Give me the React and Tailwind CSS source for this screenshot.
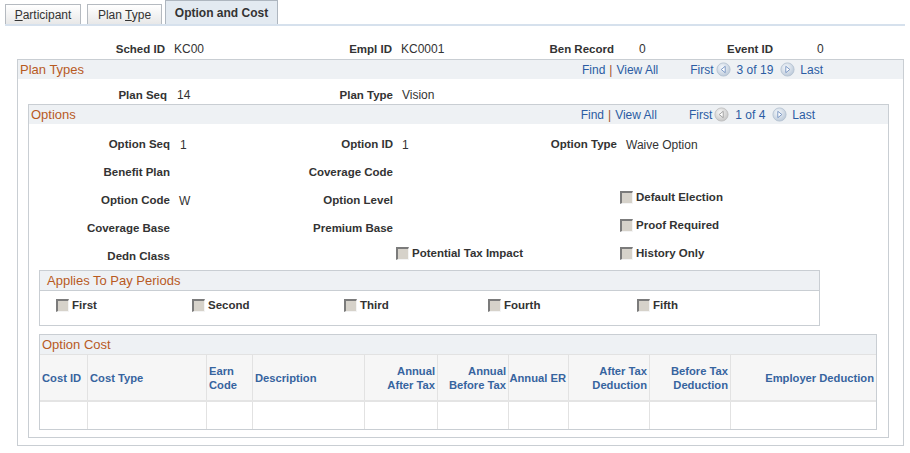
import React from "react";

const LBL = "font-bold text-[11.5px] text-[#333333] text-right whitespace-nowrap";
const VAL = "text-[12px] text-[#333333] whitespace-nowrap";
const LINK = "text-[#2b5ca3]";
const TITLE = "text-[13px] text-[#b85a1f]";

function Cb() {
  return (
    <span className="inline-block w-[13px] h-[13px] shrink-0 bg-[#d6d2ca] border-t-2 border-l-2 border-t-[#7b7b7b] border-l-[#7b7b7b] border-b border-r border-b-[#f4f4f4] border-r-[#f4f4f4]" />
  );
}

function CbLabel({ children }) {
  return (
    <div className="flex items-center gap-[3px] h-[12px] whitespace-nowrap">
      <Cb />
      <span className="font-bold text-[11.5px] text-[#333333] leading-[12px] whitespace-nowrap">{children}</span>
    </div>
  );
}

function Arrow({ dir, disabled }) {
  const id = `g-${dir}-${disabled ? "d" : "e"}`;
  return (
    <svg width="15" height="15" viewBox="0 0 15 15" className="shrink-0">
      <defs>
        <radialGradient id={id} cx="40%" cy="35%" r="70%">
          <stop offset="0%" stopColor={disabled ? "#f6f6f6" : "#f5f8fb"} />
          <stop offset="100%" stopColor={disabled ? "#c4c4c4" : "#b9c7d8"} />
        </radialGradient>
      </defs>
      <circle cx="7.5" cy="7.5" r="6.6" fill={`url(#${id})`} stroke={disabled ? "#bdbdbd" : "#b3c0cf"} strokeWidth="0.8" />
      <path
        d={dir === "l" ? "M9.2 4.3 L5.2 7.5 L9.2 10.7 Z" : "M5.8 4.3 L9.8 7.5 L5.8 10.7 Z"}
        fill="#ffffff"
        stroke={disabled ? "#9a9a9a" : "#6f8fbf"}
        strokeWidth="0.9"
        strokeLinejoin="round"
      />
    </svg>
  );
}

function Nav({ count, prevDisabled, pr }) {
  return (
    <div className={`ml-auto flex items-center text-[12px] whitespace-nowrap ${pr}`}>
      <span className={LINK}>Find</span>
      <span className="mx-[4px] text-[#a0522d]">|</span>
      <span className={LINK}>View All</span>
      <span className={`ml-[32px] ${LINK}`}>First</span>
      <span className="ml-[2px] flex"><Arrow dir="l" disabled={prevDisabled} /></span>
      <span className={`ml-[6px] ${LINK}`}>{count}</span>
      <span className="ml-[7px] flex"><Arrow dir="r" /></span>
      <span className={`ml-[5px] ${LINK}`}>Last</span>
    </div>
  );
}

function Tab({ children, active, w, cls = "" }) {
  return (
    <div
      className={`${w} ${cls} flex items-center justify-center border border-b-0 whitespace-nowrap ${
        active
          ? "h-[24px] bg-[#e3eaf1] border-[#aeb6bf] font-bold"
          : "h-[20px] bg-gradient-to-b from-[#ffffff] to-[#e8e8e8] border-[#b5bac0]"
      } text-[12px] text-[#333333]`}
    >
      {children}
    </div>
  );
}

const costCols = "grid-cols-[47px_119px_46px_112px_73px_71px_60px_81px_81px_1fr]";

function HCell({ children, right, first }) {
  return (
    <div
      className={`flex items-center px-[2px] whitespace-nowrap ${right ? "justify-end text-right" : ""} ${
        first ? "" : "border-l border-[#e2e2e2]"
      } font-bold text-[11.2px] leading-[14px] text-[#36649f]`}
    >
      <span>{children}</span>
    </div>
  );
}

export default function App() {
  return (
    <div className="w-[910px] h-[453px] overflow-hidden bg-white font-['Liberation_Sans',Arial,sans-serif] text-[#333333]">
      {/* Tabs */}
      <div className="ml-[5px] w-[900px] h-[26px] flex items-end border-b-2 border-[#d6e1ed]">
        <Tab w="w-[76px]">
          <span><span className="underline">P</span>articipant</span>
        </Tab>
        <Tab w="w-[75px]" cls="ml-[6px]">
          <span>Plan <span className="underline">T</span>ype</span>
        </Tab>
        <Tab w="w-[113px]" cls="ml-[3px]" active>
          Option and Cost
        </Tab>
      </div>

      {/* Header row */}
      <div className="mt-[15px] h-[16px] leading-[16px] grid grid-cols-[165px_135px_92px_128px_94px_86px_73px_1fr]">
        <div className={LBL}>Sched ID</div>
        <div className={`${VAL} pl-[9px]`}>KC00</div>
        <div className={LBL}>Empl ID</div>
        <div className={`${VAL} pl-[9px]`}>KC0001</div>
        <div className={LBL}>Ben Record</div>
        <div className={`${VAL} pl-[25px]`}>0</div>
        <div className={LBL}>Event ID</div>
        <div className={`${VAL} pl-[44px]`}>0</div>
      </div>

      {/* Plan Types box */}
      <div className="mt-[2px] ml-[17px] w-[887px] border border-[#c9ced3] pb-[7px]">
        <div className="h-[19px] bg-[#eef1f4] flex items-center">
          <span className={`pl-[2px] ${TITLE}`}>Plan Types</span>
          <Nav count="3 of 19" pr="pr-[80px]" />
        </div>
        <div className="mt-[8px] h-[16px] leading-[16px] grid grid-cols-[149px_133px_93px_1fr]">
          <div className={LBL}>Plan Seq</div>
          <div className={`${VAL} pl-[10px]`}>14</div>
          <div className={LBL}>Plan Type</div>
          <div className={`${VAL} pl-[9px]`}>Vision</div>
        </div>

        {/* Options box */}
        <div className="mt-[1px] ml-[10px] w-[861px] border border-[#c9ced3] pb-[7px]">
          <div className="h-[19px] bg-[#eef1f4] flex items-center">
            <span className={`pl-[2px] ${TITLE}`}>Options</span>
            <Nav count="1 of 4" prevDisabled pr="pr-[73px]" />
          </div>

          <div className="mt-[11px] grid grid-cols-[141px_130px_93px_127px_97px_1fr] auto-rows-[20px] gap-y-[8px] items-center">
            <div className={LBL}>Option Seq</div>
            <div className={`${VAL} pl-[10px]`}>1</div>
            <div className={LBL}>Option ID</div>
            <div className={`${VAL} pl-[9px]`}>1</div>
            <div className={LBL}>Option Type</div>
            <div className={`${VAL} pl-[9px]`}>Waive Option</div>

            <div className={LBL}>Benefit Plan</div>
            <div />
            <div className={LBL}>Coverage Code</div>
            <div />
            <div />
            <div />

            <div className={LBL}>Option Code</div>
            <div className={`${VAL} pl-[9px]`}>W</div>
            <div className={LBL}>Option Level</div>
            <div />
            <div />
            <div className="self-start pl-[3px]"><CbLabel>Default Election</CbLabel></div>

            <div className={LBL}>Coverage Base</div>
            <div />
            <div className={LBL}>Premium Base</div>
            <div />
            <div />
            <div className="self-start pl-[3px]"><CbLabel>Proof Required</CbLabel></div>

            <div className={LBL}>Dedn Class</div>
            <div />
            <div />
            <div className="self-start pl-[3px] overflow-visible"><CbLabel>Potential Tax Impact</CbLabel></div>
            <div />
            <div className="self-start pl-[3px]"><CbLabel>History Only</CbLabel></div>
          </div>

          {/* Applies To Pay Periods */}
          <div className="mt-[3px] ml-[10px] w-[781px] border border-[#c9ced3]">
            <div className="h-[20px] bg-[#eef1f4] border-b border-[#c9ced3] flex items-center">
              <span className={`pl-[7px] ${TITLE}`}>Applies To Pay Periods</span>
            </div>
            <div className="h-[34px] pt-[8px] pl-[16px] flex items-start">
              <div className="w-[136px]"><CbLabel>First</CbLabel></div>
              <div className="w-[152px]"><CbLabel>Second</CbLabel></div>
              <div className="w-[144px]"><CbLabel>Third</CbLabel></div>
              <div className="w-[149px]"><CbLabel>Fourth</CbLabel></div>
              <div><CbLabel>Fifth</CbLabel></div>
            </div>
          </div>

          {/* Option Cost */}
          <div className="mt-[8px] ml-[10px] w-[838px] border border-[#c9ced3]">
            <div className="h-[19px] bg-[#eef1f4] flex items-center">
              <span className={`pl-[2px] ${TITLE}`}>Option Cost</span>
            </div>
            <div className={`grid ${costCols} h-[48px] bg-[#f6f6f6] border-t border-[#e2e2e2] border-b-2 border-b-[#e4e4e4]`}>
              <HCell first>Cost ID</HCell>
              <HCell>Cost Type</HCell>
              <HCell>Earn<br />Code</HCell>
              <HCell>Description</HCell>
              <HCell right>Annual<br />After Tax</HCell>
              <HCell right>Annual<br />Before Tax</HCell>
              <HCell right>Annual ER</HCell>
              <HCell right>After Tax<br />Deduction</HCell>
              <HCell right>Before Tax<br />Deduction</HCell>
              <HCell right>Employer Deduction</HCell>
            </div>
            <div className={`grid ${costCols} h-[27px] bg-white`}>
              {Array.from({ length: 10 }).map((_, i) => (
                <div key={i} className={i === 0 ? "" : "border-l border-[#e2e2e2]"} />
              ))}
            </div>
          </div>
        </div>
      </div>
    </div>
  );
}
